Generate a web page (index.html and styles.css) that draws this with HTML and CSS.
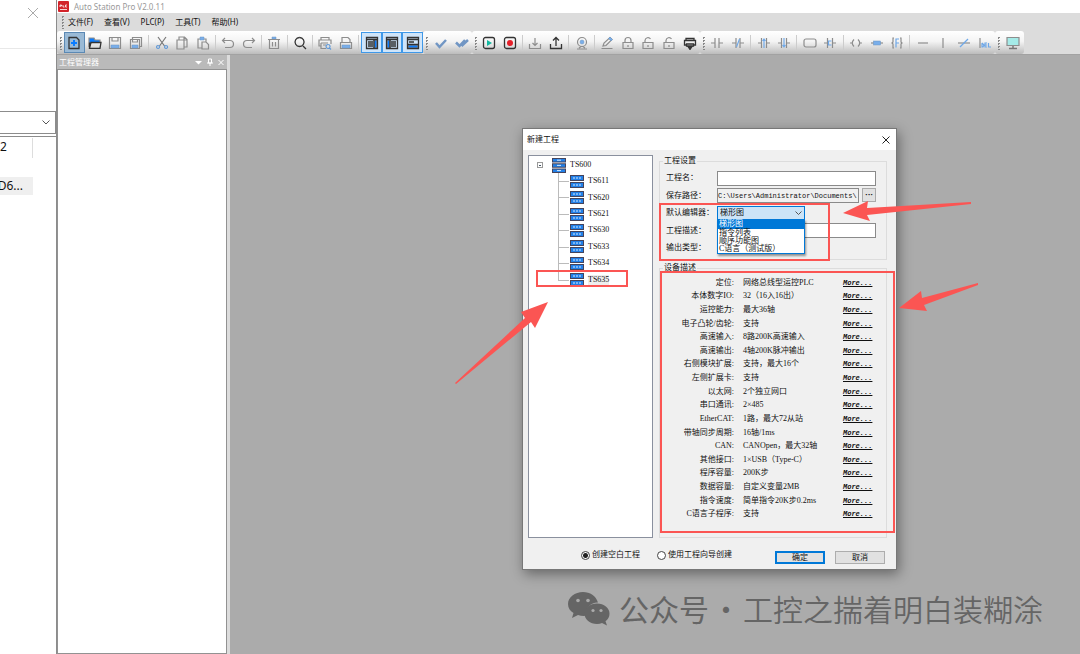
FILE: index.html
```
<!DOCTYPE html>
<html lang="zh-CN">
<head>
<meta charset="utf-8">
<title>Auto Station Pro V2.0.11</title>
<link rel="stylesheet" href="styles.css">
</head>
<body>
<svg class="defs" aria-hidden="true">
  <symbol id="device" viewBox="0 0 14 13">
    <path d="M0 0h14v6H0zM0 7h14v6H0z" fill="#45445c"/>
    <path d="M1 1h12v4H1zM1 8h12v4H1z" fill="#2280e8"/>
    <path d="M3 3h2m1 0h2m1 0h2M3 10h2m1 0h2m1 0h2" stroke="#d4eaff"/>
  </symbol>
  <symbol id="rack" viewBox="0 0 14 15">
    <path d="M0 0h14v4.500H0zM0 5.200h14v4.500H0zM0 10.400h14v4.500H0z" fill="#45445c"/>
    <path d="M1 1h12v2.500H1zM1 6.200h12v2.500H1zM1 11.400h12v2.500H1z" fill="#2280e8"/>
    <path d="M5 2.200h4M5 7.400h4M5 12.600h4" stroke="#d4eaff"/>
  </symbol>
  <symbol id="lock" viewBox="0 0 14 14"><path d="M2 6.500h10v6H2zM7 9v2M4 6.500V4.500a3 3 0 0 1 6 0v2"/></symbol>
  <symbol id="unlock" viewBox="0 0 14 14"><path d="M2 6.500h10v6H2zM7 9v2M4 6.500V4.500a3 3 0 0 1 5.500-1.500"/></symbol>
</svg>

<div class="screen">
  <aside class="backpane">
    <header class="backpane-head">
      <button class="plain" aria-label="关闭"><svg width="12" height="12" viewBox="0 0 12 12"><path d="M1 1l10 10M11 1L1 11" stroke="#aaa" fill="none"/></svg></button>
    </header>
    <button class="backpane-combo" aria-label="展开"><svg width="8" height="5" viewBox="0 0 8 5"><path d="M0.500 0.500L4 4l3.500-3.500" stroke="#555" fill="none"/></svg></button>
    <div class="backpane-list">
      <div class="cell-a">2</div>
      <div class="cell-b">D6...</div>
    </div>
  </aside>

  <main class="app">
    <header class="titlebar">
      <svg width="11" height="11" viewBox="0 0 11 11"><rect width="11" height="11" rx="1" fill="#d2232a"/><path d="M2 6V4h1.500v1H2M5 4v2h1.500M9 4H7.500v2H9M2 8.500h7" stroke="#fff" stroke-width=".8" fill="none"/></svg>
      <span>Auto Station Pro V2.0.11</span>
    </header>
    <nav class="menubar">
      <span class="grip"></span>
      <button>文件(F)</button><button>查看(V)</button><button>PLC(P)</button><button>工具(T)</button><button>帮助(H)</button>
    </nav>
    <div class="toolbars">
      <div class="bar bar-main">
        <span class="grip"></span>
        <button class="pressed" aria-label="新建"><svg viewBox="0 0 14 14"><path class="k" d="M2 1.500h7.500L12 4v8.500H2z"/><path d="M7 4v6M4 7h6" stroke="#0a7cff" stroke-width="2"/></svg></button>
        <button aria-label="打开"><svg viewBox="0 0 14 14"><path d="M1 2h5l1 2h5v3H3l-2 4z" fill="#0a7cff"/><path class="k" d="M1.500 12V6.500M1.500 12.300l1.500-6h10l-1 6z"/></svg></button>
        <button aria-label="保存"><svg viewBox="0 0 14 14"><path d="M1.500 1.500h11v11h-11zM4 2v3h6V2"/><path class="b" d="M3 9h8v3H3z"/></svg></button>
        <button aria-label="全部保存"><svg viewBox="0 0 14 14"><path d="M1.500 3.500h9v9h-9zM3.500 3V1.500h9v9H11M3.500 4v2h5V4"/><path class="b" d="M3 9h6v3H3z"/></svg></button>
        <i></i>
        <button aria-label="剪切"><svg viewBox="0 0 14 14"><path d="M3 1l6.500 9M11 1L4.500 10" stroke="#777"/><path d="M3 9.500a1.500 1.500 0 1 0 .1 0M11 9.500a1.500 1.500 0 1 0 .1 0" stroke="#629ad8"/></svg></button>
        <button aria-label="复制"><svg viewBox="0 0 14 14"><path d="M2 4h7v9H2zM4 4V1h5.500L12 3.500V11H9M9 1v3h3"/></svg></button>
        <button aria-label="粘贴"><svg viewBox="0 0 14 14"><path d="M6 12H2V3h8v3M6 6h4l2.500 2.500V13H6z"/><path class="b" d="M4 1h4v3H4z"/></svg></button>
        <i></i>
        <button aria-label="撤销"><svg viewBox="0 0 14 14"><path d="M4 2L1.500 4.500 4 7M2 4.500h7a3.500 3.500 0 0 1 0 7H4"/></svg></button>
        <button aria-label="重做"><svg viewBox="0 0 14 14"><path d="M10 2l2.500 2.500L10 7M12 4.500H5a3.500 3.500 0 0 0 0 7h5"/></svg></button>
        <i></i>
        <button aria-label="删除"><svg viewBox="0 0 14 14"><path class="b" d="M5 1h4v2H5z"/><path d="M1 3.500h12M2.500 4v8.500h9V4M5.500 6v4.500M8.500 6v4.500"/></svg></button>
        <i></i>
        <button aria-label="查找"><svg viewBox="0 0 14 14"><path class="k" d="M6.500 1.500a4.500 4.500 0 1 0 .1 0M10 10l3 3"/></svg></button>
        <i></i>
        <button aria-label="打印预览"><svg viewBox="0 0 14 14"><path d="M3 4V1.500h8V4M3 10H1V4h12v4M3 7v5.500h5M3 7h7M5 9h3"/><path d="M10 8.500a2 2 0 1 0 .1 0M11.500 12l1.500 1.500" stroke="#629ad8"/></svg></button>
        <button aria-label="打印"><svg viewBox="0 0 14 14"><path d="M3 6V1.500h6l2 2V6M1.500 6.500h11v6h-11z"/><path class="b" d="M3 9h8v3H3z"/></svg></button>
        <i></i>
        <button class="on" aria-label="右侧面板"><svg viewBox="0 0 14 14"><path d="M9 4h3v8H9z" fill="#0a7cff"/><path class="k" d="M1.500 1.500h11v11h-11zM2 3.500h10M9 4v8M3 6h5M3 8h5M3 10h5"/></svg></button>
        <button class="on" aria-label="左侧面板"><svg viewBox="0 0 14 14"><path d="M2 4h3v8H2z" fill="#0a7cff"/><path class="k" d="M1.500 1.500h11v11h-11zM2 3.500h10M5 4v8M6 6h5M6 8h5M6 10h5"/></svg></button>
        <button class="on" aria-label="底部面板"><svg viewBox="0 0 14 14"><path d="M2 9h10v3H2z" fill="#0a7cff"/><path class="k" d="M1.500 1.500h11v11h-11zM2 3.500h10M2 8.500h10M3 6h5"/></svg></button>
      </div>
      <div class="bar bar-check">
        <span class="grip"></span>
        <button aria-label="检查"><svg viewBox="0 0 14 14"><path d="M2 7l3.500 4L12 4" stroke="#7196c4" stroke-width="2.500"/></svg></button>
        <button aria-label="全部检查"><svg viewBox="0 0 14 14"><path d="M1 6.500L4.500 10 10 4M6.500 10L13 4" stroke="#7196c4" stroke-width="2.500"/></svg></button>
      </div>
      <div class="bar bar-run">
        <span class="grip"></span>
        <button aria-label="运行"><svg viewBox="0 0 14 14"><rect class="k" x="1.500" y="1.500" width="11" height="11" rx="2"/><path d="M5 4l5 3-5 3z" fill="#12b8a0" stroke="none"/></svg></button>
        <button aria-label="停止"><svg viewBox="0 0 14 14"><rect class="k" x="1.500" y="1.500" width="11" height="11" rx="2"/><circle cx="7" cy="7" r="3" fill="#e6202a" stroke="none"/></svg></button>
        <i></i>
        <button aria-label="下载"><svg viewBox="0 0 14 14"><path d="M1.500 8v4.500h11V8M7 2v7M4.500 7L7 9.500 9.500 7"/></svg></button>
        <button aria-label="上传"><svg viewBox="0 0 14 14"><path class="k" d="M1.500 8v4.500h11V8M7 10V2M4 4.500l3-3 3 3"/></svg></button>
        <i></i>
        <button aria-label="监控"><svg viewBox="0 0 14 14"><circle cx="7" cy="6" r="4.500"/><circle class="b" cx="7" cy="6" r="2"/><path d="M2 13h10M4 12l2-1.500h2l2 1.500"/></svg></button>
        <i></i>
        <button aria-label="编辑"><svg viewBox="0 0 14 14"><path d="M3 10l1-3 6-5.500 2 2L6 9.500zM1.500 12.500h11"/><path class="b" d="M8.500 2.500l1.500-1.500 2.500 2.500-1.500 1.500z"/></svg></button>
        <button aria-label="锁定"><svg><use href="#lock"/></svg></button>
        <button aria-label="解锁"><svg><use href="#unlock"/></svg></button>
        <button aria-label="全部解锁"><svg><use href="#unlock"/></svg></button>
        <button aria-label="设备"><svg viewBox="0 0 14 14"><path class="k" d="M3 4V2.500h8V4M3 9H1.500V4.500h11V9H11M3.500 8h7v2h-7z"/><path d="M5 10.500h4L7 13.500z" fill="#333" stroke="#333"/></svg></button>
      </div>
      <div class="bar bar-ladder">
        <span class="grip"></span>
        <button aria-label="常开触点"><svg viewBox="0 0 14 14"><path d="M1 7h4M5 2v10M9 2v10M9 7h4"/></svg></button>
        <button aria-label="常闭触点"><svg viewBox="0 0 14 14"><path d="M1 7h4M5 2v10M9 2v10M9 7h4"/><path class="bl" d="M5.500 11l3-8"/></svg></button>
        <i></i>
        <button aria-label="上升沿"><svg viewBox="0 0 14 14"><path d="M1 7h3M4.500 2v10M9.500 2v10M10 7h3"/><path class="bl" d="M7 12V3M5.500 5L7 3l1.500 2"/></svg></button>
        <button aria-label="下降沿"><svg viewBox="0 0 14 14"><path d="M1 7h3M4.500 2v10M9.500 2v10M10 7h3"/><path class="bl" d="M7 2v9M5.500 9L7 11l1.500-2"/></svg></button>
        <i></i>
        <button aria-label="功能块"><svg viewBox="0 0 14 14"><rect x="1" y="3" width="12" height="8" rx="2"/></svg></button>
        <button aria-label="比较"><svg viewBox="0 0 14 14"><path d="M1 7h3M4.500 2v10M9.500 2v10M10 7h3"/><path class="bl" d="M8.500 5h-3v4h3"/></svg></button>
        <i></i>
        <button aria-label="线圈"><svg viewBox="0 0 14 14"><path d="M5 3.500Q1.500 7 5 10.500M9 3.500q3.500 3.500 0 7M1 7h2M11 7h2"/></svg></button>
        <button aria-label="指令"><svg viewBox="0 0 14 14"><path d="M1 7h12"/><rect class="b" x="3.500" y="5" width="7" height="4"/></svg></button>
        <button aria-label="函数"><svg viewBox="0 0 14 14"><path d="M4 2H3v4L2 7l1 1v4h1M10 2h1v4l1 1-1 1v4h-1"/><path class="bl" d="M6 11.500V3h3M6 7h3"/></svg></button>
        <i></i>
        <button aria-label="横线"><svg viewBox="0 0 14 14"><path d="M2 7h10"/></svg></button>
        <button aria-label="竖线"><svg viewBox="0 0 14 14"><path d="M7 2v10"/></svg></button>
        <button aria-label="取反"><svg viewBox="0 0 14 14"><path d="M1 7h12"/><path class="bl" d="M3 11l8-8"/></svg></button>
        <button aria-label="删除竖线"><svg viewBox="0 0 14 14"><path d="M2 2v10"/><path class="bl" d="M4 7v4h1l1-2-2-2M9 7H7v4h2M7 9h2M10.500 7v4H13"/></svg></button>
      </div>
      <div class="bar bar-view">
        <span class="grip"></span>
        <button aria-label="显示器"><svg viewBox="0 0 14 14"><path d="M1 1.500h12v8H1z" fill="#a5ebe8"/><path d="M7 10v2M3 12.500h8" stroke="#777" stroke-width="1.500"/></svg></button>
      </div>
    </div>

    <div class="workspace">
      <section class="project">
        <header>
          <h2>工程管理器</h2>
          <svg width="30" height="9" viewBox="0 0 30 9"><path d="M1 3h7L4.500 6.500z" fill="#fff"/><path d="M14.500 1h3v4h-3zM13 5h6M16 5v3M24.500 2l5 5M29.500 2l-5 5" stroke="#fff" fill="none"/></svg>
        </header>
        <div class="project-body"></div>
      </section>
    </div>
  </main>

  <div class="watermark">
    <svg width="42" height="36" viewBox="0 0 42 36" fill="#656565"><path d="M15 1C7 1 0 6 0 13c0 4 2 7 5.500 9L4 27l6-3q5 1.500 9 .5C17 16 24 11 30 11.500 28 5 22 1 15 1z"/><path d="M29 12.500c-7 0-12.500 4.500-12.500 10.200S22 33 29 33q3 0 5-1l5 2.500-1.500-4.300c2.500-1.700 4-4.200 4-7.500 0-5.700-5.500-10.200-12.500-10.200z"/><g fill="#ababab"><circle cx="10" cy="9.500" r="1.800"/><circle cx="20" cy="9.500" r="1.800"/><circle cx="25" cy="19.500" r="1.600"/><circle cx="33" cy="19.500" r="1.600"/></g></svg>
    <span class="wm-kind">公众号</span><span class="wm-dot">·</span><span>工控之揣着明白装糊涂</span>
  </div>

  <section class="dialog" role="dialog" aria-label="新建工程">
    <header class="dialog-title">
      <h1>新建工程</h1>
      <button class="plain" aria-label="关闭"><svg width="8" height="8" viewBox="0 0 8 8"><path d="M.5.5l7 7M7.500.5l-7 7" stroke="#222" fill="none"/></svg></button>
    </header>
    <div class="dialog-body">
      <div class="tree">
        <div class="root"><button class="toggle" aria-label="折叠"></button><svg class="rack"><use href="#rack"/></svg><span>TS600</span></div>
        <ul>
          <li><svg><use href="#device"/></svg><span>TS611</span></li>
          <li><svg><use href="#device"/></svg><span>TS620</span></li>
          <li><svg><use href="#device"/></svg><span>TS621</span></li>
          <li><svg><use href="#device"/></svg><span>TS630</span></li>
          <li><svg><use href="#device"/></svg><span>TS633</span></li>
          <li><svg><use href="#device"/></svg><span>TS634</span></li>
          <li><svg><use href="#device"/></svg><span class="picked">TS635</span></li>
        </ul>
      </div>
      <div class="settings">
        <fieldset class="form-box">
          <legend>工程设置</legend>
          <div class="form">
            <label for="name">工程名：</label><input id="name" type="text">
            <label for="path">保存路径：</label><div class="path"><input id="path" type="text" value="C:\Users\Administrator\Documents\" readonly><button aria-label="浏览">···</button></div>
            <label for="editor">默认编辑器：</label>
            <div class="combo">
              <select id="editor"><option>梯形图</option><option>指令列表</option><option>顺序功能图</option><option>C语言（测试版）</option></select>
              <svg width="7" height="4" viewBox="0 0 7 4"><path d="M.5.5l3 3 3-3" stroke="#555" fill="none"/></svg>
              <ul class="popup"><li class="current">梯形图</li><li>指令列表</li><li>顺序功能图</li><li>C语言（测试版）</li></ul>
            </div>
            <label for="desc">工程描述：</label><input id="desc" type="text">
            <span>输出类型：</span><span></span>
          </div>
        </fieldset>
        <fieldset class="info-box">
          <legend>设备描述</legend>
          <table>
            <tr><th>定位:</th><td>网络总线型运控PLC</td><td><a href="#">More...</a></td></tr>
            <tr><th>本体数字IO:</th><td>32（16入16出）</td><td><a href="#">More...</a></td></tr>
            <tr><th>运控能力:</th><td>最大36轴</td><td><a href="#">More...</a></td></tr>
            <tr><th>电子凸轮/齿轮:</th><td>支持</td><td><a href="#">More...</a></td></tr>
            <tr><th>高速输入:</th><td>8路200K高速输入</td><td><a href="#">More...</a></td></tr>
            <tr><th>高速输出:</th><td>4轴200K脉冲输出</td><td><a href="#">More...</a></td></tr>
            <tr><th>右侧模块扩展:</th><td>支持，最大16个</td><td><a href="#">More...</a></td></tr>
            <tr><th>左侧扩展卡:</th><td>支持</td><td><a href="#">More...</a></td></tr>
            <tr><th>以太网:</th><td>2个独立网口</td><td><a href="#">More...</a></td></tr>
            <tr><th>串口通讯:</th><td>2×485</td><td><a href="#">More...</a></td></tr>
            <tr><th>EtherCAT:</th><td>1路，最大72从站</td><td><a href="#">More...</a></td></tr>
            <tr><th>带轴同步周期:</th><td>16轴/1ms</td><td><a href="#">More...</a></td></tr>
            <tr><th>CAN:</th><td>CANOpen，最大32轴</td><td><a href="#">More...</a></td></tr>
            <tr><th>其他接口:</th><td>1×USB（Type-C）</td><td><a href="#">More...</a></td></tr>
            <tr><th>程序容量:</th><td>200K步</td><td><a href="#">More...</a></td></tr>
            <tr><th>数据容量:</th><td>自定义变量2MB</td><td><a href="#">More...</a></td></tr>
            <tr><th>指令速度:</th><td>简单指令20K步0.2ms</td><td><a href="#">More...</a></td></tr>
            <tr><th>C语言子程序:</th><td>支持</td><td><a href="#">More...</a></td></tr>
          </table>
        </fieldset>
      </div>
    </div>
    <footer class="dialog-foot">
      <label><input type="radio" name="mode" checked>创建空白工程</label>
      <label><input type="radio" name="mode">使用工程向导创建</label>
      <div class="actions"><button class="primary">确定</button><button>取消</button></div>
    </footer>
  </section>

  <svg class="marks" width="1080" height="654" viewBox="0 0 1080 654" aria-hidden="true">
    <g fill="none" stroke="#fb5553" stroke-width="2">
      <rect x="660" y="204" width="169" height="56"/>
      <rect x="537" y="271" width="90" height="15"/>
      <rect x="661" y="272" width="233" height="260"/>
    </g>
    <g fill="#fb5553">
      <path d="M843 213l25-12-1 7 104-6v2l-104 11 3 6z"/>
      <path d="M899 308l22-17 1 7 56-15v2l-54 20 3 6z"/>
      <path d="M548 302l-13 26-4-6-75 62-1-1 70-65-4-6z"/>
    </g>
  </svg>
</div>
</body>
</html>
```
FILE: styles.css
```
* { box-sizing: border-box; }
body {
  margin: 0;
  font: 8px/10px "Noto Sans", "Noto Sans CJK SC", sans-serif;
  color: #111;
  background: #ababab;
}
button, input, select { font: inherit; color: inherit; margin: 0; padding: 0; border: 0; background: none; }
button svg { display: block; }
ul { list-style: none; margin: 0; padding: 0; }
h1, h2 { margin: 0; font: inherit; }
.defs { position: absolute; width: 0; height: 0; }
.screen { position: relative; display: flex; min-height: 100vh; overflow: hidden; }

/* Window that shows behind, on the left edge */
.backpane { width: 57px; background: #fff; border-right: 1px solid #8c8c8c; display: flex; flex-direction: column; font-size: 12px; line-height: 18px; }
.backpane-head { height: 49px; border-bottom: 1px solid #e8e8e8; display: flex; justify-content: flex-end; align-items: flex-start; padding: 7px 17px; margin-bottom: 62px; }
.backpane-combo { height: 23px; border: 1px solid #8c8c8c; border-left: 0; display: flex; align-items: center; justify-content: flex-end; padding-right: 5px; }
.backpane-list { flex: 1; margin-top: 2px; border-top: 1px solid #8c8c8c; }
.cell-a { width: 33px; height: 20px; border-right: 1px solid #ddd; margin: 1px 0 19px; }
.cell-b { width: 33px; height: 18px; background: #efefef; display: flex; justify-content: flex-end; padding-right: 10px; white-space: nowrap; }

.app { flex: 1; min-width: 0; display: flex; flex-direction: column; }
.titlebar { height: 13px; background: #fff; display: flex; align-items: center; gap: 5px; padding-left: 1px; color: #999; }
.menubar { height: 18px; background: #dcdcdc; display: flex; align-items: center; gap: 11px; padding-left: 2px; }
.menubar .grip { margin-right: -9px; }
.grip { width: 7px; height: 14px; flex: none; background: radial-gradient(circle, #888 1px, transparent 1px) 0 0 / 7px 3px; }
.toolbars { height: 23px; background: #dcdcdc; display: flex; }
.bar { display: flex; align-items: center; background: linear-gradient(#fff, #f4f4f4 45%, #bcbcbc); border-radius: 3px; }
.bar i { width: 5px; height: 16px; flex: none; background: linear-gradient(#ccc, #ccc) center / 1px 100% no-repeat; }
.bar button { flex: 1; height: 21px; display: flex; align-items: center; justify-content: center; border: 1px solid transparent; }
.bar svg { width: 14px; height: 14px; fill: none; stroke: #8d8d8d; stroke-width: 1.2; flex: none; }
.bar .k { stroke: #333; stroke-width: 1.3; }
.bar .b { fill: #79aeea; stroke: #6d94c0; stroke-width: .5; }
.bar .bl { stroke: #6fa8e8; }
.bar .pressed { background: #9abad6; border-color: #5b89b4; }
.bar .on { background: #cfe5fa; border-color: #3f98e8; }
.bar-main { width: 366px; }
.bar-check { width: 49px; }
.bar-run { width: 228px; }
.bar-ladder { width: 295px; }
.bar-view { width: 29px; }

.workspace { flex: 1; display: flex; border-top: 1px solid #a2a2a2; }
.project { width: 173px; display: flex; flex-direction: column; border-right: 3px solid #dcdcdc; background: #bababa; }
.project header { height: 14px; display: flex; align-items: center; justify-content: space-between; padding: 0 3px 0 2px; color: #fff; }
.project-body { flex: 1; background: #fff; border: 1px solid #929292; }

.watermark { position: absolute; left: 568px; top: 586px; display: flex; align-items: center; color: #656565; font: 350 30px/44px "Noto Sans CJK SC", sans-serif; }
.watermark svg { margin-top: 2px; }
.wm-kind { margin-left: 9px; font-weight: 400; }
.wm-dot { width: 34px; text-align: center; }

.dialog { position: absolute; left: 522px; top: 128px; width: 375px; border: 1px solid #777; background: #f0f0f0; box-shadow: 2px 4px 12px rgba(0,0,0,.4); font: 8px/10px "Liberation Serif", "Noto Sans CJK SC", serif; }
.dialog-title { height: 21px; background: #fff; display: flex; align-items: center; justify-content: space-between; padding: 0 6px 0 4px; }
.dialog-body { display: flex; gap: 6px; padding: 5px 9px 0 5px; }
.tree { width: 125px; border: 1px solid #8a909e; background: #fff; padding-top: 1px; }
.tree svg { width: 14px; height: 13px; flex: none; }
.root { display: flex; align-items: center; height: 16px; padding-left: 8px; gap: 4px; }
.tree .rack { height: 15px; margin-left: 5px; }
.toggle { width: 6px; height: 6px; border: 1px solid #999; background: linear-gradient(#456, #456) center / 2px 1px no-repeat; }
.tree ul { margin-left: 29px; height: 115px; display: flex; flex-direction: column; }
.tree li { flex: 1; display: flex; align-items: center; gap: 4px; padding-left: 12px; background: linear-gradient(#bbb, #bbb) 0 8px / 11px 1px no-repeat, linear-gradient(#bbb, #bbb) 0 0 / 1px 100% no-repeat; }
.tree li:last-child { background-size: 11px 1px, 1px 8px; }
.picked { background: #eee; }

.settings { flex: 1; min-width: 0; }
fieldset { margin: 0; min-width: 0; border: 1px solid #dcdcdc; }
legend { padding: 0 1px; margin-left: -3px; line-height: 12px; }
.form-box { padding: 4px 10px 4px 6px; }
.form { display: grid; grid-template-columns: 51px 1fr; grid-auto-rows: 14px; align-content: space-between; align-items: center; height: 84px; white-space: nowrap; }
.form input { height: 15px; border: 1px solid #8a8a8a; background: #fff; width: 100%; min-width: 0; }
.path { display: flex; gap: 3px; }
.form .path input { background: #f0f0f0; flex: 1; font: 7px/13px "Liberation Mono", monospace; }
.path button { width: 14px; height: 14px; border: 1px solid #aaa; background: #e1e1e1; font-weight: bold; }
.combo { position: relative; width: 88px; height: 14px; }
.combo select { appearance: none; width: 100%; height: 14px; border: 1px solid #0078d7; background: #cce4f7; padding-left: 2px; }
.combo svg { position: absolute; right: 3px; top: 5px; pointer-events: none; }
.popup { position: absolute; z-index: 2; left: 0; top: 13px; width: 100%; border: 1px solid #0078d7; background: #fff; line-height: 8px; box-shadow: 1px 2px 2px rgba(0,0,0,.4); }
.popup li { height: 8px; padding-left: 1px; }
.popup .current { height: 9px; background: #0078d7; color: #fff; }
.info-box { margin-top: 2px; padding: 2px 10px 16px 6px; }
table { border-collapse: collapse; width: 100%; height: 245px; table-layout: fixed; white-space: nowrap; }
th, td { padding: 0; font-weight: normal; text-align: left; }
th { width: 68px; text-align: right; }
td:nth-child(2) { padding-left: 9px; }
td:last-child { width: 33px; }
td a { color: #111; font: italic bold 7px/8px "Liberation Mono", monospace; text-decoration: underline; }

.dialog-foot { display: flex; align-items: center; gap: 17px; padding: 10px 11px 7px 58px; height: 31px; }
.dialog-foot label { display: flex; align-items: center; gap: 2px; white-space: nowrap; }
.dialog-foot input { width: 9px; height: 9px; appearance: none; border: 1px solid #444; border-radius: 50%; background: #fff; }
.dialog-foot input:checked { background: radial-gradient(circle, #222 2px, #fff 3px); }
.actions { display: flex; gap: 10px; margin-left: auto; padding-top: 4px; }
.actions button { width: 50px; height: 13px; border: 1px solid #adadad; background: #e1e1e1; line-height: 9px; }
.actions .primary { border: 2px solid #0078d7; }

/* Red call-outs drawn over the windows */
.marks { position: absolute; left: 0; top: 0; pointer-events: none; }
```
